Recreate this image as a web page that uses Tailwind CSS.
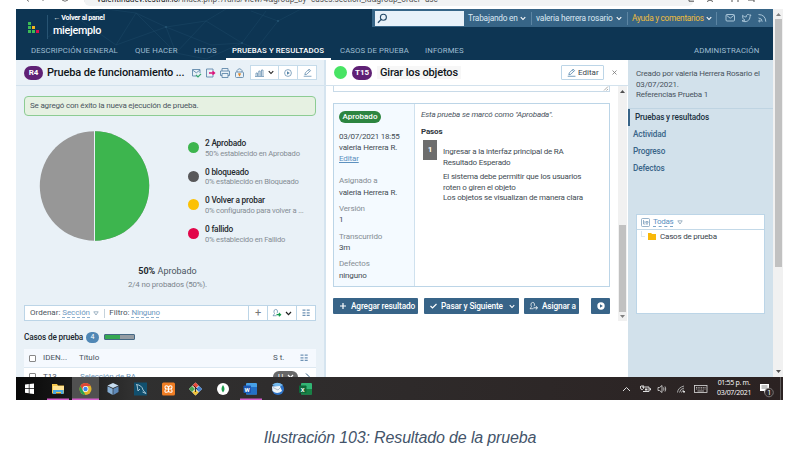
<!DOCTYPE html>
<html lang="es">
<head>
<meta charset="utf-8">
<title>miejemplo</title>
<script src="https://cdn.jsdelivr.net/npm/@tailwindcss/browser@4"></script>
</head>
<body class="bg-white w-[801px] h-[452px] overflow-hidden font-[Roboto,sans-serif] text-[8px] leading-[10px] text-[#4a545e] whitespace-nowrap">
<svg class="hidden">
  <symbol id="chev" viewBox="0 0 8 6"><path d="M1 1.2 4 4.4 7 1.2" fill="none" stroke="currentColor" stroke-width="1.5"/></symbol>
  <symbol id="pencil" viewBox="0 0 10 10"><path d="M2 7.5 2.6 5.4 6.8 1.2 8.4 2.8 4.2 7Z M5.8 2.2 7.4 3.8 M.8 9.2H9.4" fill="none" stroke="currentColor" stroke-width=".8"/></symbol>
  <symbol id="cols" viewBox="0 0 8 8"><path d="M.5 1.2H3.5M.5 3.8H3.5M.5 6.4H3.5M4.7 1.2H7.7M4.7 3.8H7.7M4.7 6.4H7.7" stroke="#6f93b5" stroke-width="1.3"/></symbol>
  <symbol id="tri" viewBox="0 0 6 5"><path d="M.8 .8H5.2L3 4Z" fill="none" stroke="#8aa3b8" stroke-width=".8"/></symbol>
  <symbol id="assign" viewBox="0 0 11 10"><path d="M1 8H5M1.4 8C1.4 6.6 2.8 6.5 2.8 5.5 1.8 4.4 1.8 1 4.1 1S6.4 4.2 5.5 5.2" fill="none" stroke="currentColor" stroke-width=".8"/></symbol>
</svg>
<main class="ml-4 w-[767px] h-[400px] flex flex-col overflow-hidden">

  <!-- browser address strip -->
  <div class="h-[9px] shrink-0 bg-white flex items-start overflow-hidden text-[#555]">
    <svg class="w-[90px] h-[3px] shrink-0" viewBox="0 0 90 3"><path d="M11 0 13 1.5M27 0V1M46 0Q49 2.5 52 0M69 0H74V1.5H69Z" fill="none" stroke="#777"/></svg>
    <div class="h-[6px] w-[610px] shrink-0 bg-[#f1f3f4] rounded-b-full -ml-[22px] pl-[12px] overflow-hidden flex">
      <span class="-mt-[6px] text-[8.2px] leading-[10px] ml-[1px]"><span class="text-[#222]">valentinadev.testrail.io</span>/index.php?/runs/view/4&amp;group_by=cases:section_id&amp;group_order=asc</span>
    </div>
    <svg class="w-[89px] h-[4px] shrink-0 -ml-[12px]" viewBox="0 0 89 4"><path d="M7 0V1.2H12M28 0 31 1.5M25 1.5 28 0M50 0V2M56 0V2M66 0H72V2M88 0" fill="none" stroke="#555"/></svg>
  </div>

  <div class="flex h-[368px] shrink-0">
    <div class="w-[757px] shrink-0 flex flex-col">

      <!-- header -->
      <header class="h-[51px] shrink-0 bg-[#0d3553] flex flex-col text-white relative">
        <svg class="absolute left-[30px] top-0 w-[290px] h-[51px]" viewBox="0 0 290 51"><path d="M2 28 30 8 70 36 90 4 130 44 160 12 196 34 220 2M30 8 60 0 90 4 120 18 160 12 180 0M70 36 120 18 130 44M196 34 160 50 130 44M120 18 165 36 196 34M205 2 232 12 255 0M232 12 210 40 196 34" fill="none" stroke="#1d4866" stroke-width=".5"/><g fill="#255473"><circle cx="30" cy="8" r="1"/><circle cx="120" cy="18" r="1"/><circle cx="232" cy="12" r="1"/><circle cx="196" cy="34" r="1"/></g></svg>
        <div class="relative flex h-[31px]">
          <svg class="w-[12px] h-[12px] ml-[12px] mt-[13px]" viewBox="0 0 12 12"><g fill="#3dbb55"><path d="M0 0H3V3H0ZM0 4H3V7H0ZM0 8H3V11H0ZM4 8H7V11H4Z"/></g><path fill="#f1b51c" d="M4 4H7V7H4Z"/><path fill="#d60e4c" d="M8 8H11V11H8Z"/></svg>
          <div class="w-px h-[24px] mt-[6px] ml-[7px] bg-[#285473]"></div>
          <div class="ml-[5px] mt-[4px] w-[319px] font-bold">
            <div class="text-[7.2px] leading-[9px] tracking-[-.3px]">← Volver al panel</div>
            <div class="text-[10.8px] leading-[13px] mt-[2px] font-medium tracking-[-.3px]">miejemplo</div>
          </div>
          <div class="h-[18px] w-[401px] bg-[#376587] flex items-center text-[8.3px] text-[#dce9f3]">
            <div class="ml-[3px] w-[89px] h-[15px] bg-[#e8f1f9] flex items-center pl-[2px]">
              <svg class="w-[11px] h-[11px]" viewBox="0 0 11 11"><circle cx="6.4" cy="4.2" r="3" fill="none" stroke="#254a68" stroke-width="1.1"/><path d="M4.2 6.4 1 9.8" stroke="#254a68" stroke-width="1.3"/></svg>
            </div>
            <span class="ml-[4px] w-[52px] tracking-[-.22px]">Trabajando en</span>
            <svg class="w-[6px] h-[5px] text-white"><use href="#chev"/></svg>
            <span class="w-px h-[13px] bg-[#5c85a3] ml-[5px]"></span>
            <span class="ml-[4px] w-[80px] tracking-[-.16px]">valeria herrera rosario</span>
            <svg class="w-[6px] h-[5px] text-white"><use href="#chev"/></svg>
            <span class="w-px h-[13px] bg-[#5c85a3] ml-[5px]"></span>
            <span class="ml-[4px] w-[74px] tracking-[-.3px] text-[#f0bd3c]">Ayuda y comentarios</span>
            <svg class="w-[6px] h-[5px] text-white"><use href="#chev"/></svg>
            <span class="w-px h-[13px] bg-[#5c85a3] ml-[4px]"></span>
            <svg class="w-[43px] h-[12px] ml-[8px]" viewBox="0 0 43 12" fill="none" stroke="#b5cfe0" stroke-width=".9"><rect x="1" y="2.5" width="8.5" height="6.5" rx="1"/><path d="M1.5 3.3 5.2 6.2 9 3.3"/><path d="M17 8.7C19 9 19.7 8.4 20 8 18 7.6 17.5 5.5 17.6 3.3 19 4.7 20.3 5 21.2 5 20.8 2.7 23.3 1.7 24.5 3H26L25 4.7C25 8.4 21 11.2 17 8.7Z"/><path d="M33.5 6Q37 6.2 37.2 9.7M33.5 2.5Q40.5 2.7 40.8 9.7"/><circle cx="34.5" cy="9" r=".8"/></svg>
          </div>
        </div>
        <nav class="relative flex h-[20px] pl-[15px] leading-[21px] text-[7.8px] text-[#9fbdd2] tracking-[.1px]">
          <span class="w-[104px]">DESCRIPCIÓN GENERAL</span>
          <span class="w-[59px]">QUE HACER</span>
          <span class="w-[32px]">HITOS</span>
          <span class="w-[105px] pl-[6px] font-medium text-white border-b-2 border-white">PRUEBAS Y RESULTADOS</span>
          <span class="w-[85px] pl-[9px]">CASOS DE PRUEBA</span>
          <span class="w-[278px] pl-[9px]">INFORMES</span>
          <span>ADMINISTRACIÓN</span>
        </nav>
      </header>

      <div class="flex h-[317px]">

        <!-- run panel -->
        <section class="w-[310px] shrink-0 bg-[#e9f1f7] border-r-2 border-[#d5e4ef] overflow-hidden">
          <div class="h-[26px] border-b border-[#d3e2ed] flex items-center pl-2">
            <span class="w-[19px] h-[14px] rounded-full bg-[#5f2175] text-white font-bold text-[8px] leading-[14px] text-center">R4</span>
            <h1 class="ml-1 w-[144px] text-[11px] leading-[14px] font-medium text-[#101519] tracking-[-.15px]">Prueba de funcionamiento ...</h1>
            <svg class="w-[54px] h-[12px] shrink-0" viewBox="0 0 54 12" fill="none" stroke="#6189aa" stroke-width=".9"><path d="M5.5 9H1.5V2.5H9V6M1.5 3 5.3 5.8 9 3"/><path stroke="#35a56f" stroke-width="1.2" d="M5 8 7 10 10 6.8"/><path d="M22 4V2H15.500V10H22V8"/><path stroke="#d9127a" stroke-width="1.4" d="M18 6H23M21.500 4.200 23.500 6 21.500 7.800"/><path d="M31 4V1.500H37V4M31 8.500H29.500V4H38.500V8.500H37M31 6.500H37V10.500H31Z"/><path d="M46 5V3.500Q48.500 0 51 3.500V5"/><rect x="44.500" y="5" width="8" height="5.500" rx="1"/><path stroke="#e0892b" stroke-width="1.300" d="M48.500 6.200V9.300M47.200 7H49.800"/></svg>
            <div class="ml-[5px] w-[67px] h-[15px] bg-white border border-[#c5dbea] flex items-center text-[#5583a8]">
              <svg class="ml-[4px] w-[9px] h-[8px]" viewBox="0 0 9 8"><path d="M1 7V4H2.500V7M3.800 7V2H5.200V7M6.500 7V1H8V7M0 7.500H9" fill="none" stroke="currentColor" stroke-width=".7"/></svg>
              <svg class="ml-[4px] w-[6px] h-[5px] text-[#222]"><use href="#chev"/></svg>
              <span class="w-px h-full bg-[#c5dbea] ml-[4px]"></span>
              <svg class="ml-[5px] w-[8px] h-[8px]" viewBox="0 0 8 8"><circle cx="4" cy="4" r="3.400" fill="none" stroke="currentColor" stroke-width=".7"/><path d="M3 2.200 5.800 4 3 5.800Z" fill="currentColor"/></svg>
              <span class="w-px h-full bg-[#c5dbea] ml-[5px]"></span>
              <svg class="ml-[5px] w-[9px] h-[9px]"><use href="#pencil"/></svg>
            </div>
          </div>
          <div class="mt-[10px] ml-2 w-[292px] h-[20px] rounded-sm border border-[#8dcc93] bg-[#e6f1e2] leading-[18px] pl-[5px] text-[8px] tracking-[-.18px]">Se agregó con éxito la nueva ejecución de prueba.</div>

          <div class="flex mt-[15px] pl-[23px] h-[112px]">
            <svg class="w-[112px] h-[112px]" viewBox="0 0 112 112"><circle cx="55.500" cy="55" r="54.700" fill="#979797"/><path d="M55.500 .3A54.700 54.700 0 0 1 55.500 109.700Z" fill="#3db54e"/><path d="M55.500 0V110" stroke="#e9f1f7" stroke-width="1"/></svg>
            <ul class="ml-[37px] mt-[7px] text-[#858d94] text-[7.600px] leading-[10.500px] tracking-[-.2px]">
              <li class="h-[28.700px] flex"><i class="w-[11px] h-[11px] mt-[4px] mr-[6px] rounded-full bg-[#3db54e]"></i><div><b class="block text-[8.300px] font-medium text-[#24292e]">2 Aprobado</b>50% establecido en Aprobado</div></li>
              <li class="h-[28.700px] flex"><i class="w-[11px] h-[11px] mt-[4px] mr-[6px] rounded-full bg-[#58585a]"></i><div><b class="block text-[8.300px] font-medium text-[#24292e]">0 bloqueado</b>0% establecido en Bloqueado</div></li>
              <li class="h-[28.700px] flex"><i class="w-[11px] h-[11px] mt-[4px] mr-[6px] rounded-full bg-[#fbc105]"></i><div><b class="block text-[8.300px] font-medium text-[#24292e]">0 Volver a probar</b>0% configurado para volver a ...</div></li>
              <li class="h-[28.700px] flex"><i class="w-[11px] h-[11px] mt-[4px] mr-[6px] rounded-full bg-[#e2064a]"></i><div><b class="block text-[8.300px] font-medium text-[#24292e]">0 fallido</b>0% establecido en Fallido</div></li>
            </ul>
          </div>
          <div class="mt-[22px] ml-2 w-[287px] text-center text-[9px] leading-[12px]"><b class="text-[#25292d]">50%</b> Aprobado</div>
          <div class="mt-[3px] ml-2 w-[287px] text-center text-[7.900px] leading-[10px] tracking-[-.15px] text-[#7b848c]">2/4 no probados (50%).</div>

          <div class="mt-[15px] ml-2 w-[292px] h-[16px] bg-white border border-[#bcd5e7] flex items-center text-[8px]">
            <span class="ml-[5px]">Ordenar:</span>
            <span class="ml-[2px] w-[28px] tracking-[-.1px] text-[#6f9ac2] border-b border-dashed border-[#8eb2d1] leading-[9px]">Sección</span>
            <svg class="ml-[3px] w-[6px] h-[5px]"><use href="#tri"/></svg>
            <span class="w-px h-[9px] bg-[#c5d2dc] ml-[5px] mr-[4px]"></span>
            <span>Filtro:</span>
            <span class="ml-[2px] w-[28px] tracking-[-.2px] text-[#6f9ac2] border-b border-dashed border-[#8eb2d1] leading-[9px]">Ninguno</span>
            <div class="ml-auto flex h-full items-center">
              <span class="w-[19px] h-full border-l border-[#bcd5e7] text-center leading-[13px] text-[11px] text-[#777]">+</span>
              <span class="w-[29px] h-full border-l border-[#bcd5e7] flex items-center pl-[4px] text-[#5d87a9]"><svg class="w-[10px] h-[10px]" viewBox="0 0 11 10"><use href="#assign"/><path d="M5 6.800H9M7.500 5 9.500 6.800 7.500 8.600" fill="none" stroke="#139a4b" stroke-width="1.200"/></svg><svg class="ml-[3px] w-[7px] h-[5px] text-[#222]"><use href="#chev"/></svg></span>
              <span class="w-[19px] h-full border-l border-[#bcd5e7] flex items-center justify-center"><svg class="w-[8px] h-[8px]"><use href="#cols"/></svg></span>
            </div>
          </div>
          <div class="flex items-center h-[12px] mt-[10px] pl-2">
            <b class="w-[62px] text-[8.200px] font-medium tracking-[-.15px] text-[#20272e]">Casos de prueba</b>
            <span class="w-[13px] h-[11px] rounded-full bg-[#5087b5] text-white text-[7px] leading-[11px] text-center">4</span>
            <span class="ml-[5px] w-[31px] h-[6px] border border-[#456884] rounded-[1px] bg-[#949ca3]"><i class="block w-1/2 h-full bg-[#36a852]"></i></span>
          </div>
          <div class="ml-2 mt-[6px] w-[292px] h-[18px] bg-[#f5f9fe] flex items-center pl-[5px] text-[8px]">
            <i class="w-[7px] h-[7px] border border-[#888] rounded-[1px] bg-white"></i><span class="ml-[7px] w-[36px]">IDEN...</span><span class="w-[194px]">Título</span><span class="w-[27px]">S t.</span><svg class="w-[8px] h-[8px]"><use href="#cols"/></svg>
          </div>
          <div class="ml-2 w-[292px] h-[18px] border-t border-[#dde8f1] bg-white flex items-center pl-[5px] text-[8px]">
            <i class="w-[7px] h-[7px] border border-[#888] rounded-[1px]"></i><span class="ml-[7px] w-[37px]">T13</span><span class="w-[193px] tracking-[-.1px] text-[#6d93b5]">Selección de RA</span><span class="w-[25px] h-[12px] rounded-full bg-[#686868] text-white flex items-center pl-[5px]">U<svg class="ml-[4px] w-[7px] h-[5px]"><use href="#chev"/></svg></span><svg class="ml-[7px] w-[5px] h-[7px]" viewBox="0 0 5 7"><path d="M1 .5 4 3.500 1 6.500" fill="none" stroke="#285679"/></svg>
          </div>
        </section>

        <!-- test detail -->
        <section class="w-[302px] shrink-0 bg-white flex flex-col">
          <div class="h-[26px] border-b border-[#d3e2ed] flex items-center pl-2">
            <i class="w-[13px] h-[13px] rounded-full bg-[#48e464]"></i>
            <span class="ml-[5px] w-[20px] h-[14px] rounded-full bg-[#5f2175] text-white font-bold text-[8px] leading-[14px] text-center">T15</span>
            <h2 class="ml-[5px] w-[184px] text-[11px] leading-[14px] font-medium text-[#101519] tracking-[-.15px]"><span class="bg-[#f7f7f7] px-[3px]">Girar los objetos</span></h2>
            <span class="w-[43px] h-[15px] border border-[#bcd5e7] rounded-[1px] flex items-center pl-[5px] text-[8px] text-[#39434c]"><svg class="w-[9px] h-[9px] mr-[2px] text-[#4379a4]"><use href="#pencil"/></svg>Editar</span>
            <svg class="ml-[8px] w-[5px] h-[5px]" viewBox="0 0 5 5"><path d="M.5 .5 4.500 4.500M4.500 .5 .5 4.500" stroke="#777" stroke-width=".8"/></svg>
          </div>
          <div class="flex h-[235px]">
            <div class="w-[292px] pl-[7px]">
              <div class="w-[277px] h-[6px] border border-t-0 border-[#c8dae8] flex justify-end items-end"><svg class="w-[6px] h-[5px]" viewBox="0 0 6 5"><path d="M1 4.500 5 .5M3.500 4.500 5 3" stroke="#888" stroke-width=".7"/></svg></div>
              <article class="mt-[11px] w-[277px] h-[184px] border border-[#bcd5e7] flex text-[8px] tracking-[-.15px]">
                <aside class="w-[81px] shrink-0 bg-[#f4faff] border-r border-[#cfe1ee] pl-[5px] pt-[7px] text-[#424b53]">
                  <div class="w-[42px] h-[12px] rounded-full bg-[#2d8540] text-white font-medium text-[8px] leading-[12px] text-center tracking-normal">Aprobado</div>
                  <div class="mt-[8px] leading-[11px]"><span class="tracking-[-.25px]">03/07/2021 18:55</span><br>valeria Herrera R.<br><span class="text-[#5d91bf] underline">Editar</span></div>
                  <div class="mt-[11px] leading-[11.600px] text-[#858d94]">Asignado a<br><span class="text-[#424b53]">valeria Herrera R.</span></div>
                  <div class="mt-[4.600px] leading-[11.600px] text-[#858d94]">Versión<br><span class="text-[#424b53]">1</span></div>
                  <div class="mt-[4.600px] leading-[11.600px] text-[#858d94]">Transcurrido<br><span class="text-[#424b53]">3m</span></div>
                  <div class="mt-[4.600px] leading-[11.600px] text-[#858d94]">Defectos<br><span class="text-[#424b53]">ninguno</span></div>
                </aside>
                <div class="pl-[6px] pt-[6px]">
                  <p class="italic tracking-[-.18px]">Esta prueba se marcó como "Aprobada".</p>
                  <b class="block mt-[7px] text-[8px] text-[#30363c]">Pasos</b>
                  <div class="flex mt-[3px]">
                    <span class="ml-[2px] w-[14px] h-[20px] bg-[#6d6d6d] text-white font-bold text-center leading-[19px]">1</span>
                    <div class="ml-[6px] pt-[6px] leading-[11px] tracking-[-.2px] text-[#424b53]">Ingresar a la interfaz principal de RA<br><div>Resultado Esperado</div><div class="mt-[4px] leading-[10.700px]">El sistema debe permitir que los usuarios<br>roten o giren el objeto<br>Los objetos se visualizan de manera clara</div></div>
                  </div>
                </div>
              </article>
              <div class="mt-[11px] flex h-[16px] w-[277px] text-white font-medium text-[8.300px] leading-[16px] tracking-[-.15px]">
                <span class="w-[85px] bg-[#386488] rounded-[1px] flex items-center pl-[7px]"><svg class="w-[6px] h-[6px] mr-[5px]" viewBox="0 0 6 6"><path d="M3 0V6M0 3H6" stroke="#fff" stroke-width="1.200"/></svg>Agregar resultado</span>
                <span class="ml-[6px] w-[95px] bg-[#386488] rounded-[1px] flex items-center pl-[6px]"><svg class="w-[7px] h-[6px] mr-[4px]" viewBox="0 0 7 6"><path d="M.5 3 2.500 5 6.500 1" fill="none" stroke="#fff" stroke-width="1.200"/></svg><span class="w-[68px]">Pasar y Siguiente</span><svg class="w-[6px] h-[5px]"><use href="#chev"/></svg></span>
                <span class="ml-[5px] w-[55px] bg-[#386488] rounded-[1px] flex items-center pl-[5px]"><svg class="w-[10px] h-[10px] mr-[3px]" viewBox="0 0 11 10"><use href="#assign"/><path d="M5 7H9M7.500 5.200 9.500 7 7.500 8.800" fill="none" stroke="#fff"/></svg>Asignar a</span>
                <span class="ml-auto w-[19px] bg-[#386488] rounded-[1px] flex items-center justify-center"><svg class="w-[8px] h-[8px]" viewBox="0 0 8 8"><circle cx="4" cy="4" r="3.700" fill="#fff"/><path d="M3 2.200 5.800 4 3 5.800Z" fill="#386488"/></svg></span>
              </div>
            </div>
            <div class="w-[9px] bg-[#f1f1f1] flex flex-col items-center">
              <svg class="w-[5px] h-[3px] mt-[4px]" viewBox="0 0 5 3"><path d="M0 3 2.500 0 5 3Z" fill="#505050"/></svg>
              <div class="mt-[132px] w-[7px] h-[87px] bg-[#c1c1c1]"></div>
              <svg class="w-[5px] h-[3px] mt-[3px]" viewBox="0 0 5 3"><path d="M0 0 2.500 3 5 0Z" fill="#808080"/></svg>
            </div>
          </div>
        </section>

        <!-- sidebar -->
        <aside class="w-[145px] bg-[#d2e1eb]">
          <p class="pl-[8px] pt-[9px] h-[49px] border-b border-[#bfd4e2] leading-[10.700px] text-[8px] tracking-[-.18px] text-[#48535d]">Creado por valeria Herrera Rosario el<br>03/07/2021.<br>Referencias Prueba 1</p>
          <nav class="font-medium text-[8.200px] tracking-[-.15px] text-[#386488]">
            <div class="h-[17px] border-l-2 border-[#386488] leading-[17px] pl-[5px] text-[#20313f]">Pruebas y resultados</div>
            <div class="h-[17px] leading-[17px] pl-[5px]">Actividad</div>
            <div class="h-[17px] leading-[17px] pl-[5px]">Progreso</div>
            <div class="h-[17px] leading-[17px] pl-[5px]">Defectos</div>
          </nav>
          <div class="mt-[37px] ml-[8px] w-[129px] h-[100px] bg-white border border-[#bcd5e7] text-[8px]">
            <div class="h-[15px] border-b border-[#c3d9e8] flex items-center pl-[4px]">
              <svg class="w-[9px] h-[9px]" viewBox="0 0 9 9" fill="none" stroke="#7d9fbd" stroke-width=".8"><rect x=".5" y=".5" width="8" height="8" rx="1"/><path d="M2.500 2V6H4.500M2.500 4H4.500M5 3.500H7V5H5ZM5 6H7"/></svg>
              <span class="ml-[3px] w-[20px] leading-[9px] text-[#5d91bf] border-b border-dashed border-[#7ca6c9] tracking-[-.3px]">Todas</span>
              <svg class="ml-[4px] w-[6px] h-[5px]"><use href="#tri"/></svg>
            </div>
            <div class="flex items-center h-[13px] pl-[4px] tracking-[-.2px] text-[#39434c]"><i class="w-[4px] h-[6px] border-l border-b border-[#dce8f0] -mt-[5px]"></i><svg class="w-[8px] h-[7px] ml-[3px] mr-[4px]" viewBox="0 0 8 7"><path d="M0 0H3.200L4 1H8V7H0Z" fill="#f8b80a"/></svg>Casos de prueba</div>
          </div>
        </aside>
      </div>
    </div>
    <div class="w-[10px] bg-[#f1f1f1] flex flex-col items-center">
      <svg class="w-[5px] h-[3px] mt-[4px] shrink-0" viewBox="0 0 5 3"><path d="M0 3 2.500 0 5 3Z" fill="#808080"/></svg>
      <div class="mt-[3px] w-[7px] h-[248px] bg-[#c1c1c1]"></div>
      <svg class="w-[5px] h-[3px] mt-auto mb-[4px]" viewBox="0 0 5 3"><path d="M0 0 2.500 3 5 0Z" fill="#505050"/></svg>
    </div>
  </div>

  <!-- taskbar -->
  <footer class="h-[23px] shrink-0 flex bg-linear-to-r from-[#080808] via-[#303030] via-15% to-[#2b2222]">
    <svg class="w-[320px] h-[23px]" viewBox="0 0 320 23">
      <path fill="#fff" d="M9 7.500 12.800 7V11.300H9ZM13.500 7 18 6.400V11.300H13.500ZM9 12H12.800V16.300L9 15.800ZM13.500 12H18V17L13.500 16.400Z"/>
      <path fill="#f5c64b" d="M36 7H41L42 8.500H48V16.500H36Z"/><path fill="#ffe394" d="M37 9H48V13H37Z"/><path fill="#4aa7df" d="M37 13H47.500V17H45V15H40V17H37Z"/><path fill="#d55ecb" d="M31 21.500H53V23H31Z"/>
      <path fill="#505050" d="M56 0H83V23H56Z"/><circle cx="69.500" cy="12" r="6" fill="#e3b52c"/><path fill="#dd4637" d="M64.300 9A6 6 0 0 1 74.700 9H69.500L67 13.500Z"/><path fill="#28a352" d="M64.300 9 69.500 18A6 6 0 0 1 64.300 9Z"/><circle cx="69.500" cy="12" r="2.900" fill="#fff"/><circle cx="69.500" cy="12" r="2.200" fill="#4086ed"/><path fill="#d55ecb" d="M56 21.500H83V23H56Z"/>
      <path fill="#c7ddf1" d="M97 6 102.500 8.500 97 11 91.500 8.500Z"/><path fill="#85aed5" d="M91.500 9.200 96.700 11.700V18L91.500 15Z"/><path fill="#5d88b8" d="M102.500 9.200 97.300 11.700V18L102.500 15Z"/>
      <path fill="#11506f" d="M118 5.500H131V18.500H118Z"/><path d="M120 7.500Q126 8 127 13L130 16.500 126.500 15M121 8 122 14 124 12" fill="none" stroke="#b6d0de" stroke-width=".9"/>
      <rect x="146" y="5.500" width="13" height="13" rx="1.500" fill="#ef7d23"/><path d="M152.500 12H150.500Q149 12 149 10.300T150.500 8.700 152.500 10.500V13.500Q152.500 15.300 150.500 15.300T149 13.700 150.500 12H154.500Q156 12 156 10.300T154.500 8.700 152.500 10.500M152.500 13.500Q152.500 15.300 154.500 15.300T156 13.700 154.500 12" fill="none" stroke="#fff" stroke-width="1.100"/>
      <path fill="#eee" d="M179.500 5.500 186 12 179.500 18.500 173 12Z"/><path fill="#e9493c" d="M179.500 5.500 182.500 8.500 179.500 11.500 176.500 8.500Z"/><path fill="#4da652" d="M176 9 179 12 176 15 173 12Z"/><path fill="#4584d1" d="M183 9 186 12 183 15 180 12Z"/><path fill="#f0c337" d="M179.500 12.500 182.500 15.500 179.500 18.500 176.500 15.500Z"/><path d="M177.500 8.500 181.500 12.500M179.500 10V15" stroke="#222" stroke-width=".9"/>
      <circle cx="207" cy="12" r="6" fill="#fff"/><path d="M207 8Q210 12 207 15.500 204 12 207 8Z" fill="#1b9b4b"/>
      <rect x="230" y="6" width="11" height="11.500" rx="1" fill="#47a1e8"/><path fill="#2371c8" d="M230 10H241V17.500H230Z"/><rect x="227.500" y="8.500" width="7.500" height="7.500" rx=".7" fill="#1c57b4"/><text x="228.500" y="14.500" font-size="6" font-weight="700" fill="#fff">W</text><path fill="#d55ecb" d="M224 21.500H246V23H224Z"/>
      <circle cx="262" cy="12" r="6" fill="#2c72c7"/><path fill="#74b9ed" d="M256 8Q261 3.500 267 8L263 10Z"/><path fill="#eef4f9" d="M256 9.500 264 9 266 14Q261 18 256.500 14Z"/><path d="M257 10.500 262 13 265 10" fill="none" stroke="#8499ad" stroke-width=".6"/>
      <rect x="285" y="6" width="11" height="11.500" rx="1" fill="#32b574"/><path fill="#178245" d="M285 12H296V17.500H285Z"/><rect x="283" y="8.500" width="7.500" height="7.500" rx=".7" fill="#0e693a"/><text x="284.800" y="14.500" font-size="6" font-weight="700" fill="#fff">X</text>
    </svg>
    <svg class="ml-auto w-[102px] h-[23px]" viewBox="0 0 102 23" fill="none" stroke="#ddd" stroke-width="1"><g transform="translate(10 0)"><path d="M4 14 7.500 10.500 11 14"/><path d="M23 10H30V14.500H24M30.500 11.500H31.500V13H30.500M21.500 9V11Q22 13 23.500 12.500 25 12 24.500 9.500M22 9H25"/><path fill="#ddd" stroke="none" d="M26 11.500H28.500V13.500H26Z"/><path d="M39 10.500H40.500L43 8.500V15.500L40.500 13.500H39ZM44.500 10.500Q45.500 12 44.500 13.500M46 9.500Q47.500 12 46 14.500" stroke-width=".8"/><path stroke="#aaa" d="M58.500 15.500Q59 10.500 65 9M60.500 15.500Q61 12 65 11M62.500 15.500Q63 13.500 65 13"/><path fill="#ddd" stroke="none" d="M64 15.500V14H66V15.500Z"/><rect x="75.500" y="8.500" width="12.500" height="7" stroke-width=".8"/><path d="M77 10.500H87M77 12H87" stroke-dasharray="1 .7" stroke-width=".7"/><path d="M78.500 14H85" stroke-width=".7"/></g></svg>
    <div class="w-[34px] ml-[6px] pt-[1px] text-center text-[7px] leading-[10px] text-white font-['Open_Sans',sans-serif] tracking-[-.3px]">01:55 p. m.<br>03/07/2021</div>
    <svg class="ml-[8px] w-[24px] h-[23px]" viewBox="0 0 24 23"><path fill="#fff" d="M1 7H10V14H7L5 16.500V14H1Z"/><path d="M2.500 9H8.500M2.500 11H8.500" stroke="#555" stroke-width=".7"/><circle cx="10" cy="15.500" r="4.300" fill="#302a2a" stroke="#8a8585" stroke-width=".8"/><text x="8.300" y="18" font-size="7" fill="#fff">1</text><path d="M21.500 0V23" stroke="#777" stroke-width=".7"/></svg>
  </footer>
</main>
<p class="mt-[28px] text-center w-[800px] font-['Liberation_Sans',sans-serif] italic text-[16px] leading-[20px] text-[#44546a] tracking-[-.15px]">Ilustración 103: Resultado de la prueba</p>
</body>
</html>
